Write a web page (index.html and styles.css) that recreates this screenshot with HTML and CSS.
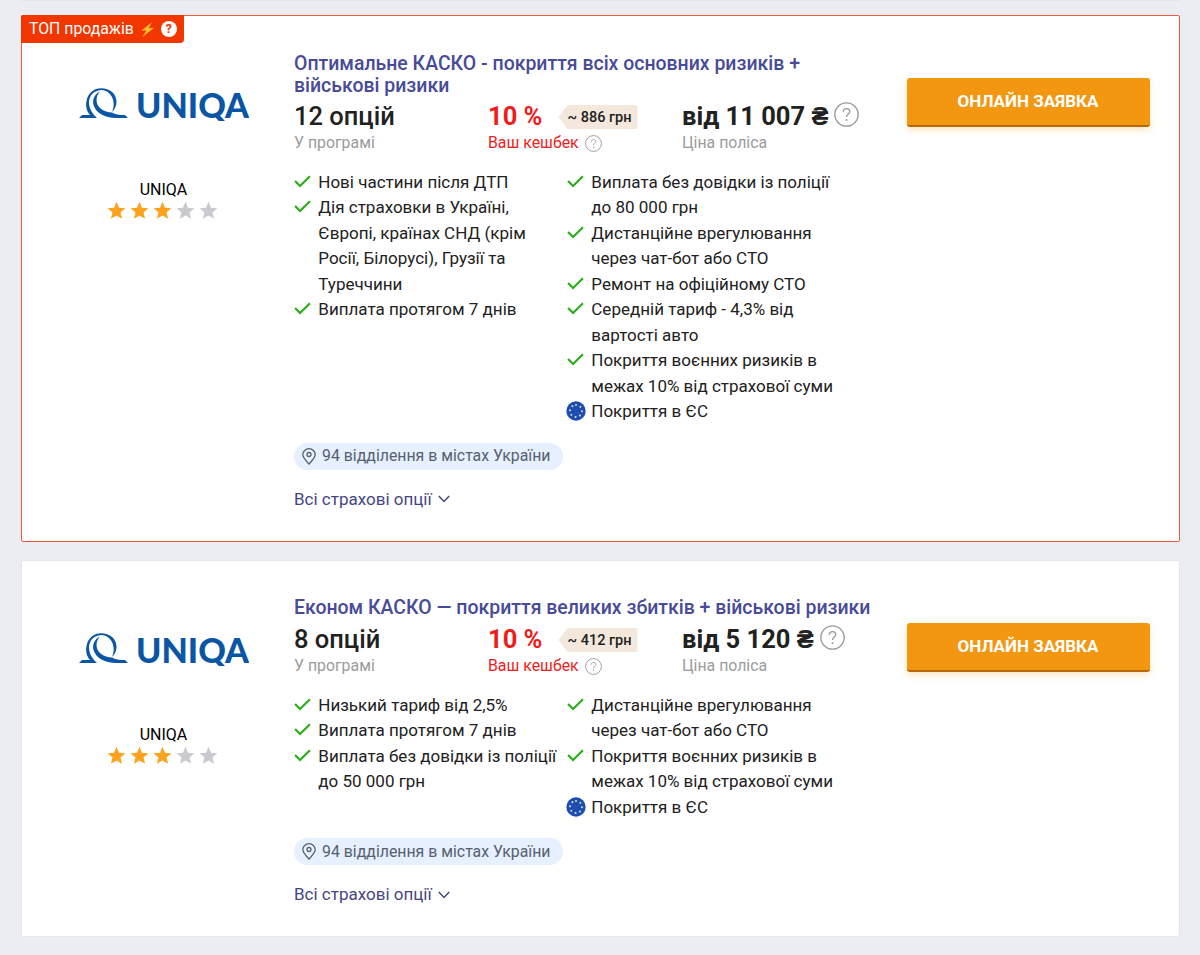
FILE: index.html
```html
<!DOCTYPE html>
<html lang="uk">
<head>
    <meta charset="UTF-8">
    <meta name="viewport" content="width=device-width, initial-scale=1.0">
    <title>КАСКО</title>
    <link rel="stylesheet" href="styles.css">
</head>
<body>
    <svg class="sprite" width="0" height="0">
        <symbol id="logo" viewBox="0 0 170 34">
            <path d="M0 31 L3 28 H11 C7.500 24 6.500 19 7.500 14 C9 6 15 1.300 22 1.300 C31 1.300 37.500 7 37.500 15 C37.500 18.500 36 22 33 25 C34.500 21 35 18 34.500 15 C33.500 7.500 28 3 22 3 C15 3.500 10 8.500 10 15.500 C10 21 13 26.500 18 31 Z" fill="#0a56a4"/>
            <path d="M21 4.500 C16 7 13 12 14.500 18 C17 26 26 31 37 31 H49 L46 28 C40 28 36 27.500 33 25.500 C25 25 17.500 21 17.500 13 C17.500 9.500 19 6.500 21 4.500 Z" fill="#0a56a4"/>
            <text class="logo-text" x="57" y="31" textLength="113" lengthAdjust="spacingAndGlyphs">UNIQA</text>
        </symbol>
        <symbol id="star" viewBox="0 0 20 20">
            <path d="M10 .8 L12.600 7.200 L19.400 7.700 L14.200 12.100 L15.900 18.800 L10 15.200 L4.100 18.800 L5.800 12.100 L.6 7.700 L7.400 7.200 Z"/>
        </symbol>
        <symbol id="check" viewBox="0 0 16 12">
            <path d="M1 5.500 L5.700 10.200 L15 1" fill="none" stroke="#2eac1c" stroke-width="2.100"/>
        </symbol>
        <symbol id="eu" viewBox="0 0 20 20">
            <circle cx="10" cy="10" r="9.700" fill="#1d4db3"/>
            <circle cx="10" cy="10" r="6" fill="none" stroke="#d9dfae" stroke-width="2" stroke-linecap="round" stroke-dasharray="0.010 4.702" transform="rotate(-90 10 10)"/>
        </symbol>
        <symbol id="help" viewBox="0 0 24 24">
            <circle cx="12" cy="12" r="11.200" fill="none" stroke="#999" stroke-width="1.300"/>
            <path d="M8.900 9.400 C8.900 7.400 10.200 6.300 12 6.300 C13.800 6.300 15.100 7.400 15.100 9.100 C15.100 11.500 12 11.700 12 14.500" fill="none" stroke="#999" stroke-width="1.300"/>
            <circle cx="12" cy="17.300" r=".95" fill="#999"/>
        </symbol>
        <symbol id="pin" viewBox="0 0 14 17">
            <path d="M7 16 C4.500 13 .8 10 .8 6.600 A6.200 5.900 0 0 1 13.200 6.600 C13.200 10 9.500 13 7 16 Z" fill="none" stroke="#56606f" stroke-width="1.300"/>
            <circle cx="7" cy="6.500" r="2" fill="none" stroke="#56606f" stroke-width="1.300"/>
        </symbol>
        <symbol id="arrow" viewBox="0 0 12 8">
            <path d="M.8 1 L6 6.500 L11.200 1" fill="none" stroke="#464685" stroke-width="1.500"/>
        </symbol>
    </svg>

    <div class="prev-card"></div>

    <div class="card card-top">
        <div class="badge">
            <span class="badge-text">ТОП продажів</span>
            <svg class="bolt" viewBox="0 0 14 16"><path d="M12 0 L.5 9 H5.800 L1.500 16 L13.800 6.500 H8.200 Z" fill="#ffbd2e"/></svg>
            <span class="badge-help">?</span>
        </div>
        <div class="company">
            <svg class="logo"><use href="#logo"/></svg>
            <div class="company-name">UNIQA</div>
            <div class="stars">
                <svg class="star on"><use href="#star"/></svg>
                <svg class="star on"><use href="#star"/></svg>
                <svg class="star on"><use href="#star"/></svg>
                <svg class="star"><use href="#star"/></svg>
                <svg class="star"><use href="#star"/></svg>
            </div>
        </div>
        <div class="info">
            <h2 class="title">Оптимальне КАСКО - покриття всіх основних ризиків +<br>військові ризики</h2>
            <div class="stats">
                <div class="stat">
                    <div class="value count">12 опцій</div>
                    <div class="label">У програмі</div>
                </div>
                <div class="stat cashback">
                    <div class="value">10 % <span class="tag">~ 886 грн</span></div>
                    <div class="label">Ваш кешбек <svg class="help-small"><use href="#help"/></svg></div>
                </div>
                <div class="stat">
                    <div class="value price">від 11 007 ₴ <svg class="help"><use href="#help"/></svg></div>
                    <div class="label">Ціна поліса</div>
                </div>
            </div>
            <div class="options">
                <ul>
                    <li><svg class="check"><use href="#check"/></svg>Нові частини після ДТП</li>
                    <li><svg class="check"><use href="#check"/></svg>Дія страховки в Україні,<br>Європі, країнах СНД (крім<br>Росії, Білорусі), Грузії та<br>Туреччини</li>
                    <li><svg class="check"><use href="#check"/></svg>Виплата протягом 7 днів</li>
                </ul>
                <ul>
                    <li><svg class="check"><use href="#check"/></svg>Виплата без довідки із поліції<br>до 80 000 грн</li>
                    <li><svg class="check"><use href="#check"/></svg>Дистанційне врегулювання<br>через чат-бот або СТО</li>
                    <li><svg class="check"><use href="#check"/></svg>Ремонт на офіційному СТО</li>
                    <li><svg class="check"><use href="#check"/></svg>Середній тариф - 4,3% від<br>вартості авто</li>
                    <li><svg class="check"><use href="#check"/></svg>Покриття воєнних ризиків в<br>межах 10% від страхової суми</li>
                    <li><svg class="eu"><use href="#eu"/></svg>Покриття в ЄС</li>
                </ul>
            </div>
            <div class="places"><svg class="pin"><use href="#pin"/></svg>94 відділення в містах України</div>
            <a class="more">Всі страхові опції <svg class="arrow"><use href="#arrow"/></svg></a>
        </div>
        <div class="action">
            <button type="button" class="btn">ОНЛАЙН ЗАЯВКА</button>
        </div>
    </div>

    <div class="card">
        <div class="company">
            <svg class="logo"><use href="#logo"/></svg>
            <div class="company-name">UNIQA</div>
            <div class="stars">
                <svg class="star on"><use href="#star"/></svg>
                <svg class="star on"><use href="#star"/></svg>
                <svg class="star on"><use href="#star"/></svg>
                <svg class="star"><use href="#star"/></svg>
                <svg class="star"><use href="#star"/></svg>
            </div>
        </div>
        <div class="info">
            <h2 class="title">Економ КАСКО — покриття великих збитків + військові ризики</h2>
            <div class="stats">
                <div class="stat">
                    <div class="value count">8 опцій</div>
                    <div class="label">У програмі</div>
                </div>
                <div class="stat cashback">
                    <div class="value">10 % <span class="tag">~ 412 грн</span></div>
                    <div class="label">Ваш кешбек <svg class="help-small"><use href="#help"/></svg></div>
                </div>
                <div class="stat">
                    <div class="value price">від 5 120 ₴ <svg class="help"><use href="#help"/></svg></div>
                    <div class="label">Ціна поліса</div>
                </div>
            </div>
            <div class="options">
                <ul>
                    <li><svg class="check"><use href="#check"/></svg>Низький тариф від 2,5%</li>
                    <li><svg class="check"><use href="#check"/></svg>Виплата протягом 7 днів</li>
                    <li><svg class="check"><use href="#check"/></svg>Виплата без довідки із поліції<br>до 50 000 грн</li>
                </ul>
                <ul>
                    <li><svg class="check"><use href="#check"/></svg>Дистанційне врегулювання<br>через чат-бот або СТО</li>
                    <li><svg class="check"><use href="#check"/></svg>Покриття воєнних ризиків в<br>межах 10% від страхової суми</li>
                    <li><svg class="eu"><use href="#eu"/></svg>Покриття в ЄС</li>
                </ul>
            </div>
            <div class="places"><svg class="pin"><use href="#pin"/></svg>94 відділення в містах України</div>
            <a class="more">Всі страхові опції <svg class="arrow"><use href="#arrow"/></svg></a>
        </div>
        <div class="action">
            <button type="button" class="btn">ОНЛАЙН ЗАЯВКА</button>
        </div>
    </div>
</body>
</html>
```
FILE: styles.css
```css
* {
    box-sizing: border-box;
}
body {
    margin: 0;
    padding: 0 20px 0 21px;
    background-color: #ebedf3;
    color: #212121;
    font-family: Roboto, sans-serif;
    font-size: 17px;
    line-height: 25.5px;
}
.sprite {
    position: absolute;
}
svg {
    flex-shrink: 0;
}
.prev-card {
    height: 1px;
    margin-bottom: 14px;
    background-color: #e3e5ea;
}
.card {
    position: relative;
    display: grid;
    grid-template-columns: 272px 612.5px 243px;
    height: 377px;
    padding-top: 35.5px;
    margin-bottom: 18px;
    background-color: #fff;
    border: 1px solid #e4e6ec;
    border-radius: 2px;
}
.card-top {
    height: 527px;
    border: 1px solid #f0593c;
}
.badge {
    position: absolute;
    top: -1px;
    left: -1px;
    display: flex;
    align-items: center;
    width: 163px;
    height: 28px;
    padding-left: 8px;
    background-color: #f23600;
    border-radius: 2px 0 4px 0;
    color: #fff;
    font-size: 15.8px;
    line-height: 20px;
}
.bolt {
    width: 15px;
    height: 15px;
    margin-left: 6px;
}
.badge-help {
    width: 16px;
    height: 16px;
    margin-left: 6px;
    border-radius: 50%;
    background-color: #fff;
    color: #f23600;
    font-size: 13px;
    font-weight: 700;
    line-height: 16px;
    text-align: center;
}
.company {
    display: flex;
    flex-direction: column;
    align-items: center;
    padding: 35px 0 0 11px;
}
.logo {
    width: 170px;
    height: 34px;
}
.logo-text {
    fill: #0a56a4;
    font-family: Lato, sans-serif;
    font-size: 34px;
    font-weight: 900;
}
.company-name {
    margin-top: 57px;
    color: #000;
    font-size: 16px;
    line-height: 23px;
}
.stars {
    display: flex;
    gap: 4px;
    margin-left: -2px;
}
.star {
    width: 19px;
    height: 19px;
    fill: #c9cacf;
}
.star.on {
    fill: #fda21f;
}
.title {
    margin: 0;
    color: #474b98;
    font-size: 19.47px;
    font-weight: 500;
    line-height: 22px;
    white-space: nowrap;
}
.card-top .title {
    padding-top: 1px;
}
.stats {
    display: grid;
    grid-template-columns: 194px 194px auto;
    margin-top: 6px;
}
.card-top .stats {
    margin-top: 5px;
}
.value {
    display: flex;
    align-items: center;
    height: 31px;
    font-size: 25.5px;
    font-weight: 700;
    white-space: nowrap;
}
.count {
    font-weight: 500;
}
.label {
    display: flex;
    align-items: center;
    height: 20px;
    color: #9b9b9b;
    font-size: 15.85px;
}
.cashback .value, .cashback .label {
    color: #f01c1c;
}
.tag {
    height: 24px;
    margin-left: 16px;
    padding: 0 6px 0 9px;
    background-color: #f4e8dc;
    border-radius: 3px;
    clip-path: polygon(0 50%, 9px 0, 100% 0, 100% 100%, 9px 100%);
    color: #212121;
    font-size: 14.5px;
    font-weight: 500;
    line-height: 25px;
}
.help {
    width: 25px;
    height: 25px;
    margin: -6px 0 0 6px;
}
.help-small {
    width: 17px;
    height: 17px;
    margin: 2px 0 0 6px;
}
.options {
    display: grid;
    grid-template-columns: 273px auto;
    margin-top: 17px;
}
ul {
    margin: 0;
    padding: 0;
    list-style: none;
}
li {
    position: relative;
    padding-left: 24.3px;
    white-space: nowrap;
}
.check, .eu {
    position: absolute;
    top: 5px;
    left: 0;
    width: 17px;
    height: 13px;
}
.eu {
    top: 2px;
    left: -1px;
    width: 20px;
    height: 20px;
}
.places {
    display: flex;
    align-items: center;
    width: 269px;
    height: 27px;
    margin-top: 18px;
    padding-left: 8px;
    background-color: #e6f0ff;
    border-radius: 14px;
    color: #56606f;
    font-size: 15.85px;
}
.pin {
    width: 14px;
    height: 17px;
    margin-right: 6px;
}
.more {
    display: flex;
    align-items: center;
    margin-top: 17px;
    color: #464685;
}
.arrow {
    width: 12px;
    height: 8px;
    margin-left: 6px;
}
.action {
    padding-top: 26px;
}
.btn {
    display: block;
    width: 243px;
    height: 49px;
    padding: 0;
    background-color: #f39711;
    border: none;
    border-bottom: 2px solid #b8690b;
    border-radius: 3px;
    box-shadow: 0 3px 7px rgba(243, 151, 17, 0.25);
    color: #fff;
    font-family: Roboto, sans-serif;
    font-size: 17px;
    font-weight: 700;
    cursor: pointer;
}
```
